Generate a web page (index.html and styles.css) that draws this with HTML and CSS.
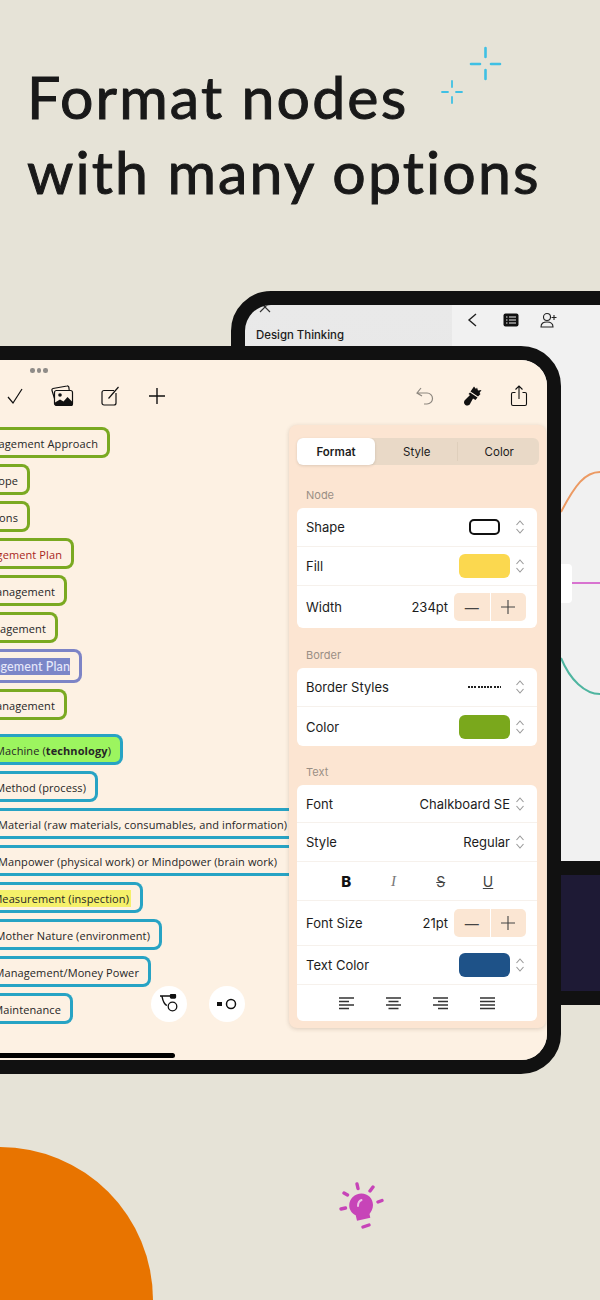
FILE: index.html
```html
<!DOCTYPE html>
<html lang="en">
<head>
    <meta charset="UTF-8">
    <meta name="viewport" content="width=device-width, initial-scale=1.0">
    <title>Format nodes with many options</title>
    <link rel="stylesheet" href="styles.css">
</head>
<body>
    <div class="page">
        <h1 class="headline">Format nodes<br>with many options</h1>

        <svg class="sparkles" width="70" height="64" viewBox="0 0 70 64" fill="none" stroke="#3fc0e4" stroke-linecap="round">
            <g stroke-width="2.6">
                <path d="M37 20h9M57 20h9M51.500 4v9M51.500 26v9"/>
            </g>
            <g stroke-width="1.8">
                <path d="M8 48h6M22 48h6M18 37v6M18 53v6"/>
            </g>
        </svg>

        <!-- tablet at the back -->
        <div class="tablet tablet-back">
            <div class="back-top">
                <div class="back-sidebar">
                    <svg class="back-close" width="12" height="12" viewBox="0 0 12 12" fill="none" stroke="#333" stroke-width="1.2"><path d="M1 1l10 10M11 1L1 11"/></svg>
                    <div class="back-title">Design Thinking</div>
                </div>
                <div class="back-main">
                    <div class="back-toolbar">
                        <svg width="12" height="16" viewBox="0 0 12 16" fill="none" stroke="#222" stroke-width="1.4"><path d="M10 2L3 8l7 6"/></svg>
                        <svg width="16" height="14" viewBox="0 0 16 14"><rect x="0.500" y="0.500" width="15" height="13" rx="2" fill="#111"/><path d="M3 4h1.500M3 7h1.500M3 10h1.500M6 4h7M6 7h7M6 10h7" stroke="#eee" stroke-width="1"/></svg>
                        <svg width="18" height="16" viewBox="0 0 18 16" fill="none" stroke="#222" stroke-width="1.1"><circle cx="7" cy="5" r="3.500"/><path d="M1 15c0-4 2.500-5 6-5s6 1 6 5zM14 3v5M11.500 5.500h5"/></svg>
                    </div>
                    <svg class="back-curves" width="148" height="556" viewBox="0 0 148 556" fill="none" stroke-width="2">
                        <path d="M109 207C123 180 133 167 148 167" stroke="#ec9a63"/>
                        <path d="M120 278h28" stroke="#d873d0"/>
                        <path d="M109 353C118 375 133 389 148 389" stroke="#4fb5a0"/>
                    </svg>
                    <div class="back-node"></div>
                </div>
            </div>
            <div class="back-dark"></div>
        </div>

        <!-- tablet in front -->
        <div class="tablet tablet-front">
            <div class="screen">
                <div class="grip"><span></span><span></span><span></span></div>

                <div class="toolbar">
                    <div class="tool-group">
                        <svg class="tool" viewBox="0 0 24 24" fill="none" stroke="#111" stroke-width="1.200"><path d="M5 13l5 6L19 5"/></svg>
                        <svg class="tool" viewBox="0 0 24 24" fill="none" stroke="#111" stroke-width="1.200">
                            <path d="M4.500 14.500L2 6.500a1.500 1.500 0 0 1 1-2l14-2.500a1.500 1.500 0 0 1 1.800 1.200L19.200 6"/>
                            <rect x="4.500" y="6.500" width="18" height="15" rx="2" fill="#fdf1e3"/>
                            <circle cx="10" cy="11" r="1.800" fill="#111" stroke="none"/>
                            <path d="M5 21.500v-3l5-3 3.500 2 4-4.500 5 5v3.500z" fill="#111" stroke="none"/>
                        </svg>
                        <svg class="tool" viewBox="0 0 24 24" fill="none" stroke="#111" stroke-width="1.200"><path d="M18 9v10a2 2 0 0 1-2 2H6a2 2 0 0 1-2-2V8.500a2 2 0 0 1 2-2h10"/><path d="M10.500 14.500L20.500 3"/></svg>
                        <svg class="tool" viewBox="0 0 24 24" fill="none" stroke="#111" stroke-width="1.400"><path d="M12 4v16M4 12h16"/></svg>
                    </div>
                    <div class="tool-group">
                        <svg class="tool" viewBox="0 0 24 24" fill="none" stroke="#8d877f" stroke-width="1.200"><path d="M9 4L5 9l5 3M5 9h10a5.500 5.500 0 0 1 0 11h-3"/></svg>
                        <svg class="tool" viewBox="0 0 24 24" fill="#111"><path d="M14 2.500l2 2.500 1-1.500 1 3 3.500-.5-2 3 1 1-2.500 2.500-7.500-5z"/><path d="M10 8.500l7.500 5-2 2.500-2.500-1.500-2.500 4.500a3.300 3.300 0 1 1-5-3.500l4.500-4.500-1.500-1z"/></svg>
                        <svg class="tool" viewBox="0 0 24 24" fill="none" stroke="#111" stroke-width="1.100"><path d="M8.500 8.500H6a1.500 1.500 0 0 0-1.500 1.500v10A1.500 1.500 0 0 0 6 21.500h12a1.500 1.500 0 0 0 1.500-1.500V10A1.500 1.500 0 0 0 18 8.500h-2.500M12 15V2M8.500 5.500L12 2l3.500 3.500"/></svg>
                    </div>
                </div>

                <div class="node-list">
                    <div class="node green w110">Project Management Approach</div>
                    <div class="node green w30">Scope</div>
                    <div class="node green w30">Assumptions</div>
                    <div class="node green w74 red">Risk Management Plan</div>
                    <div class="node green w67">Cost Management</div>
                    <div class="node green w58">Time Management</div>
                    <div class="node purple w82"><span class="selected">Management Plan</span></div>
                    <div class="node green w67 after-group">Quality Management</div>
                    <div class="node blue w123 filled">Machine (<b>technology</b>)</div>
                    <div class="node blue w98">Method (process)</div>
                    <div class="node blue wide">Material (raw materials, consumables, and information)</div>
                    <div class="node blue wide">Manpower (physical work) or Mindpower (brain work)</div>
                    <div class="node blue w143"><span class="marked">Measurement (inspection)</span></div>
                    <div class="node blue w162">Mother Nature (environment)</div>
                    <div class="node blue w151">Management/Money Power</div>
                    <div class="node blue w73">Maintenance</div>
                </div>

                <div class="float-btn float-one">
                    <svg width="20" height="20" viewBox="0 0 20 20" fill="none" stroke="#111" stroke-width="1.300"><path d="M1 2h11M3 2.500c1 5 2 8 5 9"/><rect x="11.500" y="0.500" width="5" height="3.500" rx="0.800" fill="#111"/><circle cx="13.500" cy="12.500" r="4.300"/></svg>
                </div>
                <div class="float-btn float-two">
                    <svg width="24" height="12" viewBox="0 0 24 12" fill="none" stroke="#111" stroke-width="1.500"><rect x="2" y="4" width="5" height="4" fill="#111" stroke="none"/><circle cx="16" cy="6" r="4.500"/></svg>
                </div>
                <div class="home-bar"></div>

                <div class="panel">
                    <div class="tabs">
                        <div class="tab active">Format</div>
                        <div class="tab">Style</div>
                        <div class="tab tab-last">Color</div>
                    </div>

                    <div class="section-label first">Node</div>
                    <div class="card">
                        <div class="row h39">
                            <span>Shape</span>
                            <div class="value"><div class="shape-preview"></div><svg class="updown" viewBox="0 0 10 16"><path d="M1.500 6L5 2l3.500 4M1.500 10L5 14l3.500-4"/></svg></div>
                        </div>
                        <div class="row h39">
                            <span>Fill</span>
                            <div class="value"><div class="swatch yellow"></div><svg class="updown" viewBox="0 0 10 16"><path d="M1.500 6L5 2l3.500 4M1.500 10L5 14l3.500-4"/></svg></div>
                        </div>
                        <div class="row h42 last">
                            <span>Width</span>
                            <div class="value tight"><span>234pt</span>
                                <div class="stepper">
                                    <div class="step">&#8212;</div>
                                    <div class="step"><svg width="14" height="14" viewBox="0 0 14 14" stroke="#444" stroke-width="1.100"><path d="M7 0v14M0 7h14"/></svg></div>
                                </div>
                            </div>
                        </div>
                    </div>

                    <div class="section-label">Border</div>
                    <div class="card">
                        <div class="row h39">
                            <span>Border Styles</span>
                            <div class="value"><div class="dots-preview"></div><svg class="updown" viewBox="0 0 10 16"><path d="M1.500 6L5 2l3.500 4M1.500 10L5 14l3.500-4"/></svg></div>
                        </div>
                        <div class="row h39 last">
                            <span>Color</span>
                            <div class="value"><div class="swatch green-fill"></div><svg class="updown" viewBox="0 0 10 16"><path d="M1.500 6L5 2l3.500 4M1.500 10L5 14l3.500-4"/></svg></div>
                        </div>
                    </div>

                    <div class="section-label third">Text</div>
                    <div class="card">
                        <div class="row h38">
                            <span>Font</span>
                            <div class="value"><span>Chalkboard SE</span><svg class="updown" viewBox="0 0 10 16"><path d="M1.500 6L5 2l3.500 4M1.500 10L5 14l3.500-4"/></svg></div>
                        </div>
                        <div class="row h39">
                            <span>Style</span>
                            <div class="value"><span>Regular</span><svg class="updown" viewBox="0 0 10 16"><path d="M1.500 6L5 2l3.500 4M1.500 10L5 14l3.500-4"/></svg></div>
                        </div>
                        <div class="row h39 format-row">
                            <span class="fmt fmt-b">B</span>
                            <span class="fmt fmt-i">I</span>
                            <span class="fmt fmt-s">S</span>
                            <span class="fmt fmt-u">U</span>
                        </div>
                        <div class="row h45">
                            <span>Font Size</span>
                            <div class="value tight"><span>21pt</span>
                                <div class="stepper">
                                    <div class="step">&#8212;</div>
                                    <div class="step"><svg width="14" height="14" viewBox="0 0 14 14" stroke="#444" stroke-width="1.100"><path d="M7 0v14M0 7h14"/></svg></div>
                                </div>
                            </div>
                        </div>
                        <div class="row h39">
                            <span>Text Color</span>
                            <div class="value"><div class="swatch navy"></div><svg class="updown" viewBox="0 0 10 16"><path d="M1.500 6L5 2l3.500 4M1.500 10L5 14l3.500-4"/></svg></div>
                        </div>
                        <div class="row h36 last align-row">
                            <svg class="align" viewBox="0 0 15 13"><path d="M0 1h15M0 4.500h10M0 8h15M0 11.500h10"/></svg>
                            <svg class="align" viewBox="0 0 15 13"><path d="M0 1h15M2.500 4.500h10M0 8h15M2.500 11.500h10"/></svg>
                            <svg class="align" viewBox="0 0 15 13"><path d="M0 1h15M5 4.500h10M0 8h15M5 11.500h10"/></svg>
                            <svg class="align" viewBox="0 0 15 13"><path d="M0 1h15M0 4.500h15M0 8h15M0 11.500h15"/></svg>
                        </div>
                    </div>
                </div>
            </div>
        </div>

        <div class="blob"></div>

        <svg class="bulb" width="46" height="50" viewBox="0 0 46 50" fill="none" stroke="#c744b8" stroke-linecap="round">
            <path d="M6 13l3.500 2M19 4l1 4.500M35 7l-3 4M40 22l4-1.500M3 29l4.500-1M25 47l6-2" stroke-width="3.400"/>
            <path d="M23.500 13.500c6.500 0 11.500 5 11.500 11.500 0 4-2 7-3.500 9l.8 3.800-13.300 3-1.300-5.500c-4-2-6.500-5.500-6.500-10 0-6.500 5.500-11.800 12.300-11.800z" fill="#c744b8" stroke="none"/>
            <path d="M20 26c0-3.500 1-5 3.500-6" stroke="#ecc4e6" stroke-width="2"/>
        </svg>
    </div>
</body>
</html>
```

FILE: styles.css
```css
:root {
    --bg: #e6e3d7;
    --frame: #111111;
    --screen: #fdf1e3;
    --panel: #fce5d2;
    --text: #1c1c1c;
    --green: #7aa921;
    --blue: #27a3c4;
}

* {
    margin: 0;
    padding: 0;
    box-sizing: border-box;
}

body {
    background: var(--bg);
    font-family: Inter, "Liberation Sans", sans-serif;
    color: var(--text);
}

.page {
    position: relative;
    width: 600px;
    height: 1300px;
    overflow: hidden;
    background: var(--bg);
}

.headline {
    padding: 59px 0 0 27px;
    font-family: Lato, "Open Sans", sans-serif;
    font-size: 59px;
    font-weight: 400;
    line-height: 75px;
    letter-spacing: 2.150px;
    -webkit-text-stroke: 1px #191919;
    color: #191919;
}

.sparkles {
    position: absolute;
    left: 434px;
    top: 44px;
}

/* devices */
.tablet {
    position: absolute;
    border: 14px solid var(--frame);
    border-radius: 40px;
    overflow: hidden;
}

.tablet-back {
    left: 231px;
    top: 291px;
    width: 430px;
    height: 714px;
    display: flex;
    flex-direction: column;
    background: var(--frame);
}

.back-top {
    display: flex;
    height: 556px;
}

.back-sidebar {
    position: relative;
    width: 207px;
    background: linear-gradient(#e9e9e9, #e3e3e3);
}

.back-close {
    position: absolute;
    left: 14px;
    top: -4px;
}

.back-title {
    padding: 23px 0 0 11px;
    font-size: 11.400px;
    line-height: 15px;
    font-weight: 500;
}

.back-main {
    position: relative;
    flex: 1;
    background: #f1f1f1;
}

.back-toolbar {
    display: flex;
    align-items: center;
    gap: 21px;
    height: 29px;
    padding-left: 14px;
}

.back-toolbar svg:first-child {
    margin-right: 4px;
}

.back-curves {
    position: absolute;
    left: 0;
    top: 0;
}

.back-node {
    position: absolute;
    left: 100px;
    top: 259px;
    width: 20px;
    height: 39px;
    border-radius: 4px;
    background: #fff;
}

.back-dark {
    flex: 1;
    margin-top: 14px;
    background: #1e1a35;
}

.tablet-front {
    left: -60px;
    top: 346px;
    width: 621px;
    height: 728px;
}

.screen {
    position: relative;
    height: 100%;
    padding-left: 46px;
    background: var(--screen);
}

.grip {
    position: absolute;
    left: 76px;
    top: 8px;
    display: flex;
    gap: 2px;
}

.grip span {
    width: 4.500px;
    height: 4.500px;
    border-radius: 50%;
    background: #8f8c88;
}

.toolbar {
    display: flex;
    justify-content: space-between;
    padding: 24px 16px 0 3px;
}

.tool-group {
    display: flex;
    gap: 23.300px;
}

.tool {
    width: 24px;
    height: 24px;
}

/* mind map nodes */
.node-list {
    display: flex;
    flex-direction: column;
    align-items: flex-start;
    gap: 6px;
    margin-top: 19px;
    overflow: hidden;
}

.node {
    display: flex;
    justify-content: flex-end;
    align-items: center;
    flex: none;
    height: 31px;
    padding: 1px 9px 0 0;
    border: 3px solid var(--green);
    border-left: none;
    border-radius: 0 8px 8px 0;
    overflow: hidden;
    white-space: nowrap;
    font-family: "Open Sans", "DejaVu Sans", sans-serif;
    font-size: 11px;
    font-weight: 500;
    letter-spacing: 0.100px;
    color: #262626;
}

.node.green { border-color: var(--green); }
.node.blue { border-color: var(--blue); }
.node.purple { height: 34px; border-color: #7d84c6; }
.node.red { color: #a8261c; }
.node.filled { background: #9cf55f; }
.after-group { margin-bottom: 8px; }

.selected {
    background: #7b86c8;
    color: #e6e8fa;
    line-height: 17px;
    font-family: Lato, sans-serif;
    font-size: 12.500px;
}

.marked {
    padding-right: 2px;
    background: #f5f06a;
    line-height: 17px;
}

.w30 { width: 30px; }
.w58 { width: 58px; }
.w67 { width: 67px; }
.w73 { width: 73px; }
.w74 { width: 74px; }
.w82 { width: 82px; }
.w98 { width: 98px; }
.w110 { width: 110px; }
.w123 { width: 123px; }
.w143 { width: 143px; }
.w151 { width: 151px; }
.w162 { width: 162px; }
.wide { width: 300px; justify-content: flex-start; text-indent: -2px; }

.float-btn {
    position: absolute;
    display: flex;
    align-items: center;
    justify-content: center;
    width: 36px;
    height: 36px;
    border-radius: 50%;
    background: #fff;
}

.float-one { left: 197px; top: 626px; }
.float-two { left: 255px; top: 626px; }

.home-bar {
    position: absolute;
    left: 0;
    top: 693px;
    width: 221px;
    height: 5px;
    border-radius: 3px;
    background: #000;
}

/* format panel */
.panel {
    position: absolute;
    left: 335px;
    top: 65px;
    width: 257px;
    height: 603px;
    padding: 13px 9px 0 8px;
    background: var(--panel);
    border-radius: 8px;
    box-shadow: 0 1px 4px rgba(90, 60, 30, 0.2);
}

.tabs {
    display: flex;
    height: 27px;
    margin-right: -2px;
    background: #e9d9c7;
    border-radius: 6px;
    font-size: 11.500px;
}

.tab {
    flex: 1;
    display: flex;
    align-items: center;
    justify-content: center;
    padding-left: 2px;
}

.tab.active {
    flex: none;
    width: 78px;
    padding-left: 0;
    background: #fff;
    border-radius: 6px;
    font-weight: 600;
    box-shadow: 0 1px 3px rgba(0, 0, 0, 0.12);
}

.tab-last {
    border-left: 1px solid #dfcfbc;
    margin: 4px 0;
}

.section-label {
    padding: 20px 0 6px 9px;
    font-size: 11px;
    line-height: 14px;
    color: #9a8f85;
}

.section-label.first {
    padding-top: 23px;
}

.section-label.third {
    padding-top: 19px;
}

.card {
    background: #fff;
    border-radius: 6px;
}

.row {
    display: flex;
    align-items: center;
    justify-content: space-between;
    padding: 0 11px 0 9px;
    border-bottom: 1px solid #f6f1ec;
    font-size: 13px;
}

.row.last { border-bottom: none; }

.h36 { height: 36px; }
.h38 { height: 38px; }
.h39 { height: 39px; }
.h42 { height: 42px; }
.h45 { height: 45px; }

.value {
    display: flex;
    align-items: center;
    gap: 5px;
}

.value.tight { gap: 6px; }

.updown {
    width: 10px;
    height: 16px;
    margin-right: 1px;
    fill: none;
    stroke: #999;
    stroke-width: 1.100;
}

.swatch {
    width: 51px;
    height: 24px;
    border-radius: 6px;
}

.swatch.yellow { background: #fbd84f; }
.swatch.green-fill { background: #7aa81c; }
.swatch.navy { background: #1e5288; }

.shape-preview {
    width: 31px;
    height: 16px;
    margin: 0 10px;
    border: 2px solid #111;
    border-radius: 5px;
}

.dots-preview {
    width: 33px;
    height: 2px;
    margin: 0 9px;
    background: repeating-linear-gradient(90deg, #222 0 2px, transparent 2px 3.200px);
}

.stepper {
    display: flex;
    width: 72px;
    height: 28px;
    border-radius: 5px;
    background: #fbe6d3;
}

.step {
    flex: 1;
    display: flex;
    align-items: center;
    justify-content: center;
    font-size: 14px;
    color: #444;
}

.step + .step {
    border-left: 1px solid #fff;
}

.format-row {
    justify-content: flex-start;
    padding: 0 0 0 25.500px;
}

.fmt {
    width: 47.300px;
    text-align: center;
    font-size: 14px;
}

.fmt-b { font-size: 15px; font-weight: 800; color: #111; }
.fmt-i { font-family: "Liberation Serif", serif; font-style: italic; font-size: 15px; color: #777; }
.fmt-s { text-decoration: line-through; color: #444; }
.fmt-u { text-decoration: underline; color: #444; }

.align-row {
    justify-content: flex-start;
    gap: 32px;
    padding: 0 0 0 42px;
}

.align {
    width: 15px;
    height: 13px;
    fill: none;
    stroke: #333;
    stroke-width: 1.300;
}

.blob {
    position: absolute;
    left: -153px;
    top: 1147px;
    width: 306px;
    height: 306px;
    border-radius: 50%;
    background: #e87400;
}

.bulb {
    position: absolute;
    left: 338px;
    top: 1180px;
}
```
